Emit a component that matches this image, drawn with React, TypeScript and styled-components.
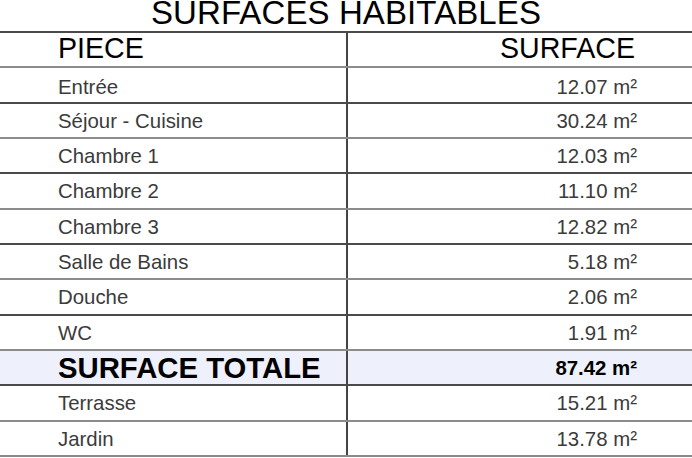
import React from "react";
import styled, { createGlobalStyle } from "styled-components";

const Global = createGlobalStyle`
  html, body { margin: 0; padding: 0; background: #ffffff; }
  body { font-family: "Liberation Sans", Arial, sans-serif; overflow: hidden; }
`;

const Page = styled.div`
  width: 692px;
  height: 458px;
  background: #ffffff;
  display: flex;
  flex-direction: column;
`;

const Title = styled.h1`
  margin: 0;
  height: 31px;
  font-size: 33px;
  font-weight: 400;
  line-height: 26px;
  color: #000;
  text-align: center;
  letter-spacing: 0.1px;
`;

const Table = styled.div`
  display: grid;
  grid-template-rows: repeat(12, 1fr);
  height: 424px;
  border-bottom: 2px solid #8a8a8a;
`;

const Row = styled.div<{ $dark: boolean; $total?: boolean }>`
  display: grid;
  grid-template-columns: 346px 1fr;
  border-top: 2px solid ${(p) => (p.$dark ? "#4a4a4a" : "#8c8c8c")};
  background: ${(p) => (p.$total ? "#eef1fb" : "transparent")};
`;

const Cell = styled.div<{ $right?: boolean; $nudge?: number }>`
  display: flex;
  align-items: center;
  justify-content: ${(p) => (p.$right ? "flex-end" : "flex-start")};
  padding-top: ${(p) => Math.max(p.$nudge ?? 0, 0)}px;
  padding-bottom: ${(p) => Math.max(-(p.$nudge ?? 0), 0)}px;
  padding-left: ${(p) => (p.$right ? "0" : "58px")};
  padding-right: ${(p) => (p.$right ? "55px" : "0")};
  border-left: ${(p) => (p.$right ? "2px solid #444" : "none")};
  white-space: nowrap;
`;

const HeadText = styled.span<{ $right?: boolean }>`
  font-size: 28.6px;
  line-height: 28px;
  color: #000;
  margin-right: ${(p) => (p.$right ? "2px" : "0")};
`;

const BodyText = styled.span`
  font-size: 20.4px;
  line-height: 20px;
  color: #3b3b3b;
`;

const TotalLabel = styled.span`
  font-size: 29.3px;
  line-height: 28px;
  font-weight: 700;
  color: #000;
`;

const TotalValue = styled.span`
  font-size: 20.4px;
  line-height: 20px;
  font-weight: 700;
  color: #000;
`;

type Item = { name: string; area: string; total?: boolean; nudge?: number };

const items: Item[] = [
  { name: "Entrée", area: "12.07", nudge: 4 },
  { name: "Séjour - Cuisine", area: "30.24", nudge: 1 },
  { name: "Chambre 1", area: "12.03", nudge: 1 },
  { name: "Chambre 2", area: "11.10", nudge: 0 },
  { name: "Chambre 3", area: "12.82", nudge: 2 },
  { name: "Salle de Bains", area: "5.18", nudge: 1 },
  { name: "Douche", area: "2.06", nudge: 0 },
  { name: "WC", area: "1.91", nudge: 1 },
  { name: "SURFACE TOTALE", area: "87.42", total: true, nudge: 1 },
  { name: "Terrasse", area: "15.21", nudge: 0 },
  { name: "Jardin", area: "13.78", nudge: 1 },
];

export default function App() {
  return (
    <Page>
      <Global />
      <Title>SURFACES HABITABLES</Title>
      <Table>
        <Row $dark>
          <Cell $nudge={-4}>
            <HeadText>PIECE</HeadText>
          </Cell>
          <Cell $right $nudge={-4}>
            <HeadText $right>SURFACE</HeadText>
          </Cell>
        </Row>
        {items.map((it, i) => (
          <Row key={it.name} $dark={i % 2 === 1} $total={it.total}>
            <Cell $nudge={it.nudge}>
              {it.total ? <TotalLabel>{it.name}</TotalLabel> : <BodyText>{it.name}</BodyText>}
            </Cell>
            <Cell $right $nudge={it.nudge}>
              {it.total ? (
                <TotalValue>{it.area} m²</TotalValue>
              ) : (
                <BodyText>{it.area} m²</BodyText>
              )}
            </Cell>
          </Row>
        ))}
      </Table>
    </Page>
  );
}
